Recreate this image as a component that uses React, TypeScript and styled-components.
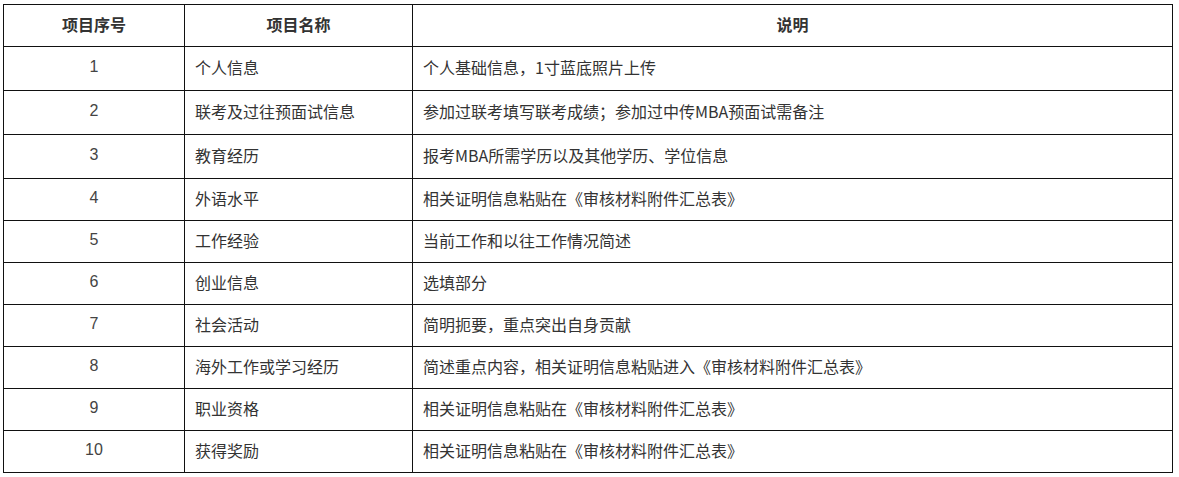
import styled, { createGlobalStyle } from "styled-components";

interface Item {
  no: number;
  name: string;
  note: string;
  tall?: boolean;
}

const items: Item[] = [
  { no: 1, name: "个人信息", note: "个人基础信息，1寸蓝底照片上传", tall: true },
  {
    no: 2,
    name: "联考及过往预面试信息",
    note: "参加过联考填写联考成绩；参加过中传MBA预面试需备注",
    tall: true,
  },
  { no: 3, name: "教育经历", note: "报考MBA所需学历以及其他学历、学位信息", tall: true },
  { no: 4, name: "外语水平", note: "相关证明信息粘贴在《审核材料附件汇总表》" },
  { no: 5, name: "工作经验", note: "当前工作和以往工作情况简述" },
  { no: 6, name: "创业信息", note: "选填部分" },
  { no: 7, name: "社会活动", note: "简明扼要，重点突出自身贡献" },
  {
    no: 8,
    name: "海外工作或学习经历",
    note: "简述重点内容，相关证明信息粘贴进入《审核材料附件汇总表》",
  },
  { no: 9, name: "职业资格", note: "相关证明信息粘贴在《审核材料附件汇总表》" },
  { no: 10, name: "获得奖励", note: "相关证明信息粘贴在《审核材料附件汇总表》" },
];

const App = () => {
  return (
    <>
      <GlobalStyle />
      <Page>
        <Table>
          <colgroup>
            <col style={{ width: 181 }} />
            <col style={{ width: 228 }} />
            <col />
          </colgroup>
          <thead>
            <Row $height={42}>
              <HeadCell>项目序号</HeadCell>
              <HeadCell>项目名称</HeadCell>
              <HeadCell>说明</HeadCell>
            </Row>
          </thead>
          <tbody>
            {items.map((item) => (
              <Row key={item.no} $height={item.tall ? 44 : 42}>
                <NumCell>{item.no}</NumCell>
                <TextCell>{item.name}</TextCell>
                <TextCell>{item.note}</TextCell>
              </Row>
            ))}
          </tbody>
        </Table>
      </Page>
    </>
  );
};

export default App;

const GlobalStyle = createGlobalStyle`
  html, body {
    margin: 0;
    padding: 0;
    background: #fff;
  }
  body {
    font-family: "Noto Sans CJK SC", "Noto Sans", sans-serif;
    color: #333;
  }
`;

const Page = styled.div`
  padding: 4px 0 0 3px;
`;

const Table = styled.table`
  width: 1170px;
  border-collapse: collapse;
  table-layout: fixed;
  font-size: 16px;
  line-height: 1.4;
`;

const Row = styled.tr<{ $height: number }>`
  height: ${(p) => p.$height}px;
`;

const HeadCell = styled.th`
  border: 1px solid #111;
  padding: 0 10px 3px;
  text-align: center;
  font-weight: 700;
  color: #333;
  vertical-align: middle;
`;

const NumCell = styled.td`
  border: 1px solid #111;
  padding: 0 10px 3px;
  text-align: center;
  vertical-align: middle;
  font-family: "Liberation Sans", "Noto Sans CJK SC", sans-serif;
  font-size: 16px;
  color: #444;
`;

const TextCell = styled.td`
  border: 1px solid #111;
  padding: 0 10px 3px;
  text-align: left;
  vertical-align: middle;
  white-space: nowrap;
`;
